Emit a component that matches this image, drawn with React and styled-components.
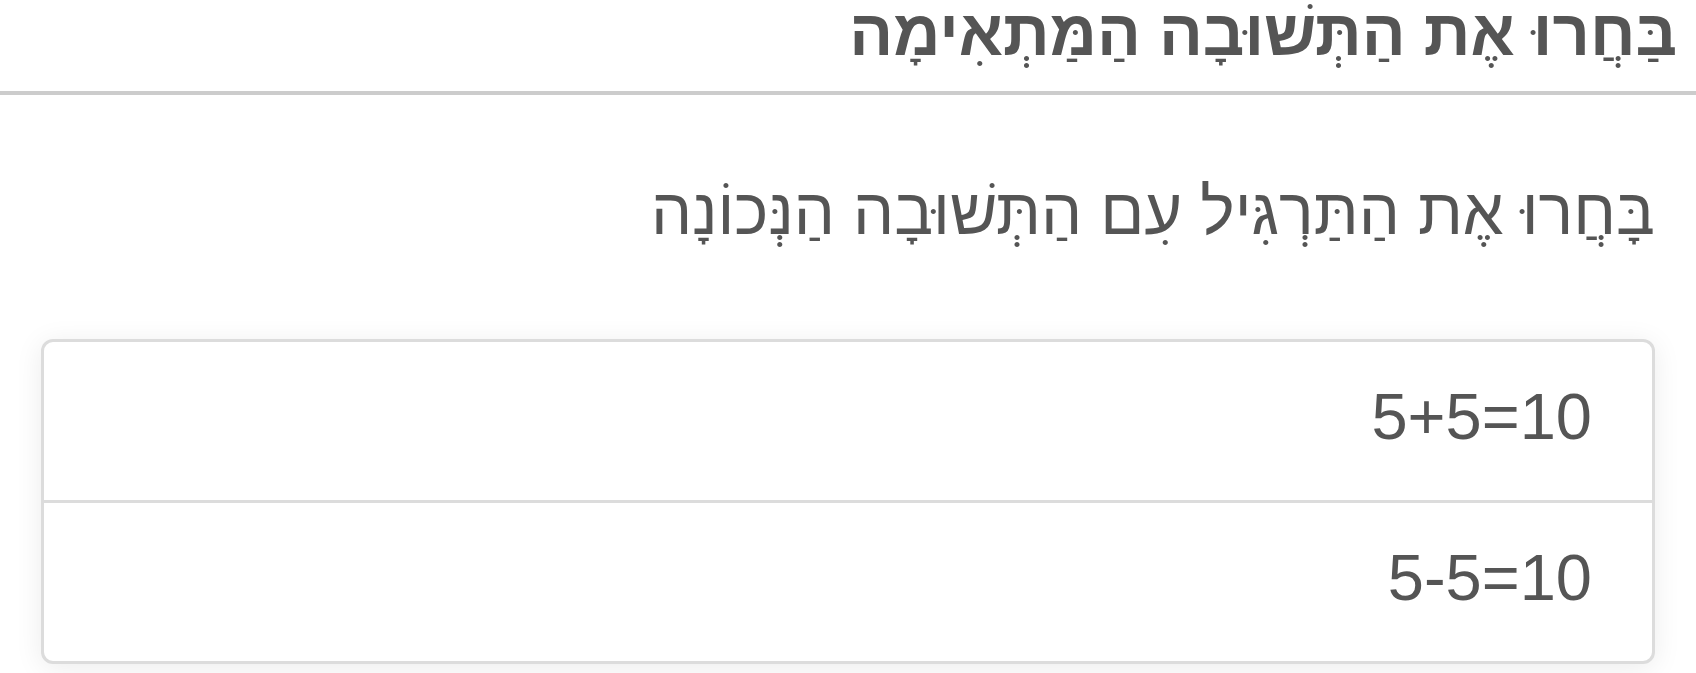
import React from 'react';
import styled, { createGlobalStyle } from 'styled-components';

const GlobalStyle = createGlobalStyle`
  html, body {
    margin: 0;
    padding: 0;
    background: #fff;
  }
  body {
    font-family: "Liberation Sans", Arial, sans-serif;
    color: #555;
  }
`;

const answers = ['5+5=10', '5-5=10'];

const App = () => {
  return (
    <Page dir="rtl">
      <GlobalStyle />
      <Header>
        <Title>בַּחֲרוּ אֶת הַתְּשׁוּבָה הַמַּתְאִימָה</Title>
      </Header>

      <Content>
        <Instruction>בָּחֲרוּ אֶת הַתַּרְגִּיל עִם הַתְּשׁוּבָה הַנְּכוֹנָה</Instruction>

        <AnswerList>
          {answers.map((answer, index) => (
            <Answer key={index} last={index === answers.length - 1}>
              <Expression>{answer}</Expression>
            </Answer>
          ))}
        </AnswerList>
      </Content>
    </Page>
  );
};

const Page = styled.div`
  width: 100%;
  min-height: 100vh;
  overflow: hidden;
`;

const Header = styled.header`
  padding: 1px 19px 26px;
  border-bottom: 4px solid #ccc;
`;

const Title = styled.h1`
  margin: -1px 0 0;
  font-size: 65px;
  line-height: 1;
  font-weight: bold;
  color: #555;
`;

const Content = styled.main`
  padding: 0 41px;
`;

const Instruction = styled.p`
  margin: 84px 0 95px;
  font-size: 65px;
  line-height: 1;
  color: #555;
`;

const AnswerList = styled.div`
  display: flex;
  flex-direction: column;
  background: #fff;
  border: 3px solid #dcdcdc;
  border-radius: 12px;
  box-shadow: 0 4px 28px rgba(0, 0, 0, 0.08);
  overflow: hidden;
`;

const Answer = styled.div`
  padding: 39px 60px 47px;
  font-size: 65px;
  line-height: 72px;
  color: #555;
  border-bottom: ${props => (props.last ? 'none' : '3px solid #dcdcdc')};
  cursor: pointer;
`;

const Expression = styled.span`
  direction: ltr;
  unicode-bidi: isolate;
`;

export default App;
